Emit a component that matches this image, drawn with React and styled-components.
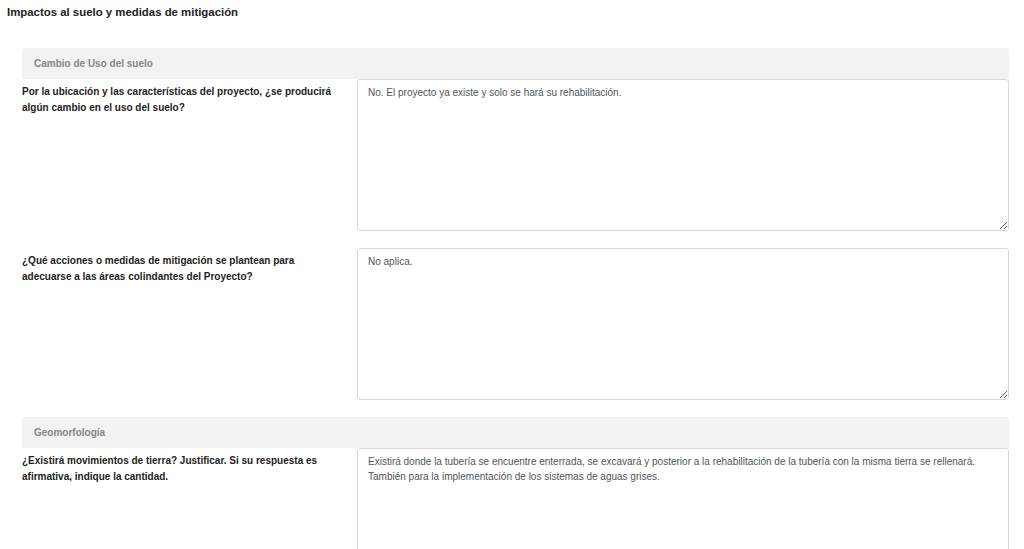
import React from "react";
import styled, { createGlobalStyle } from "styled-components";

const Global = createGlobalStyle`
  html, body { margin: 0; padding: 0; overflow: hidden; background: #fff; }
  body { font-family: "Liberation Sans", Arial, sans-serif; color: #212529; }
`;

const Page = styled.div`
  padding: 6px 15px 0 7px;
`;

const Title = styled.h1`
  margin: 0 0 29px 0;
  font-size: 11.4px;
  line-height: 13px;
  font-weight: 700;
  color: #222;
`;

const Panel = styled.section`
  margin-left: 15px;
  display: flex;
  flex-direction: column;
`;

const SectionHeader = styled.div`
  background: #f1f2f4;
  border-radius: 3px 3px 0 0;
  height: 31px;
  padding: 0 12px;
  display: flex;
  align-items: center;
  font-size: 10px;
  font-weight: 700;
  color: #83878c;
  margin-top: ${(p) => (p.$first ? "0" : "17px")};
`;

const Row = styled.div`
  display: grid;
  grid-template-columns: 335px 1fr;
  margin-top: ${(p) => (p.$first ? "0" : "17px")};
`;

const Label = styled.label`
  font-size: 10px;
  line-height: 16px;
  font-weight: 700;
  color: #222;
  padding: 5px 20px 0 0;
`;

const Area = styled.textarea`
  box-sizing: border-box;
  width: 100%;
  height: 152px;
  margin: 0;
  border: 1px solid #d6d8db;
  border-radius: 3px;
  padding: 5px 10px;
  font-family: "Liberation Sans", Arial, sans-serif;
  font-size: 10px;
  line-height: 15px;
  color: #50555b;
  background: #fff;
  resize: vertical;
  outline: none;
  display: block;
`;

const sections = [
  {
    title: "Cambio de Uso del suelo",
    rows: [
      {
        q: "Por la ubicación y las características del proyecto, ¿se producirá algún cambio en el uso del suelo?",
        a: "No. El proyecto ya existe y solo se hará su rehabilitación.",
      },
      {
        q: "¿Qué acciones o medidas de mitigación se plantean para adecuarse a las áreas colindantes del Proyecto?",
        a: "No aplica.",
      },
    ],
  },
  {
    title: "Geomorfología",
    rows: [
      {
        q: "¿Existirá movimientos de tierra? Justificar. Si su respuesta es afirmativa, indique la cantidad.",
        a: "Existirá donde la tubería se encuentre enterrada, se excavará y posterior a la rehabilitación de la tubería con la misma tierra se rellenará.\nTambién para la implementación de los sistemas de aguas grises.",
      },
    ],
  },
];

export default function App() {
  return (
    <>
      <Global />
      <Page>
        <Title>Impactos al suelo y medidas de mitigación</Title>
        <Panel>
          {sections.map((s, si) => (
            <React.Fragment key={s.title}>
              <SectionHeader $first={si === 0}>{s.title}</SectionHeader>
              {s.rows.map((r, ri) => (
                <Row key={ri} $first={ri === 0}>
                  <Label>{r.q}</Label>
                  <Area readOnly value={r.a} />
                </Row>
              ))}
            </React.Fragment>
          ))}
        </Panel>
      </Page>
    </>
  );
}
